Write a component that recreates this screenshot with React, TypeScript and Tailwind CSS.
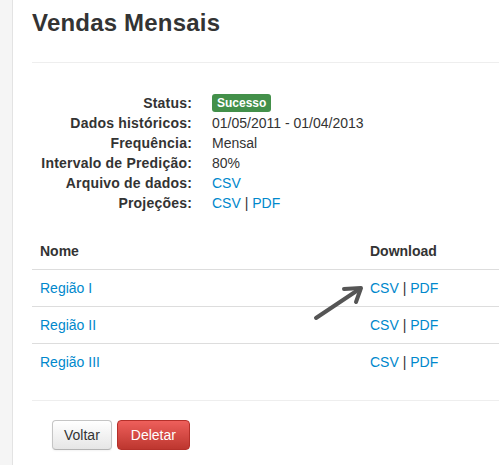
import React from 'react'

const details: { label: string; value: React.ReactNode }[] = [
  { label: 'Status:', value: <span className="inline-block bg-[#43904a] text-white text-[12px] font-bold leading-[14px] px-[5px] py-[2px] rounded-[3px] align-[1px]">Sucesso</span> },
  { label: 'Dados históricos:', value: '01/05/2011 - 01/04/2013' },
  { label: 'Frequência:', value: 'Mensal' },
  { label: 'Intervalo de Predição:', value: '80%' },
  { label: 'Arquivo de dados:', value: <a className="text-[#0088cc]">CSV</a> },
  { label: 'Projeções:', value: <Links /> },
]

const regions = ['Região I', 'Região II', 'Região III']

function Links() {
  return (
    <span>
      <a className="text-[#0088cc]">CSV</a> | <a className="text-[#0088cc]">PDF</a>
    </span>
  )
}

export default function App() {
  return (
    <div className="flex w-[499px] h-[465px] overflow-hidden bg-white text-[#333] text-[14px] leading-[20px] font-['Liberation_Sans',Arial,sans-serif]">
      <div className="w-[13px] shrink-0 bg-[#f5f5f5] border-r border-[#e3e3e3]" />

      <div className="relative flex-1 pl-[19px]">
        <h2 className="pt-[8px] text-[24px] leading-[30px] font-bold tracking-[0.2px]">Vendas Mensais</h2>
        <div className="mt-[24px] border-t border-[#eeeeee]" />

        <div className="mt-[30px] flex flex-col">
          {details.map(d => (
            <div key={d.label} className="flex gap-[20px] h-[20px]">
              <div className="w-[160px] text-right font-bold tracking-[0.2px]">{d.label}</div>
              <div>{d.value}</div>
            </div>
          ))}
        </div>

        <table className="mt-[20px] w-[467px] border-collapse">
          <thead>
            <tr>
              <th className="w-[330px] text-left p-[8px] font-bold">Nome</th>
              <th className="text-left p-[8px] font-bold">Download</th>
            </tr>
          </thead>
          <tbody>
            {regions.map(r => (
              <tr key={r}>
                <td className="p-[8px] border-t border-[#dddddd]">
                  <a className="text-[#0088cc]">{r}</a>
                </td>
                <td className="p-[8px] border-t border-[#dddddd]">
                  <Links />
                </td>
              </tr>
            ))}
          </tbody>
        </table>

        <div className="mt-[20px] border-t border-[#eeeeee]" />

        <div className="mt-[19px] pl-[20px] flex gap-[5px]">
          <button className="h-[30px] px-[11px] rounded-[4px] border border-[#c5c5c5] border-b-[#b3b3b3] bg-gradient-to-b from-white to-[#e6e6e6] text-[#333] shadow-[0_1px_2px_rgba(0,0,0,0.05)]">
            Voltar
          </button>
          <button className="h-[30px] px-[13px] rounded-[4px] border border-[#b5302a] bg-gradient-to-b from-[#ee5f5b] to-[#bd362f] text-white">
            Deletar
          </button>
        </div>

        <svg className="absolute left-[299px] top-[279px]" width="62" height="46" viewBox="0 0 62 46">
          <g stroke="#555" strokeWidth="4" strokeLinecap="round" strokeLinejoin="round" fill="none">
            <line x1="4" y1="39" x2="46" y2="11" />
            <polyline points="32,10 49,9 44,23" />
          </g>
        </svg>
      </div>
    </div>
  )
}
